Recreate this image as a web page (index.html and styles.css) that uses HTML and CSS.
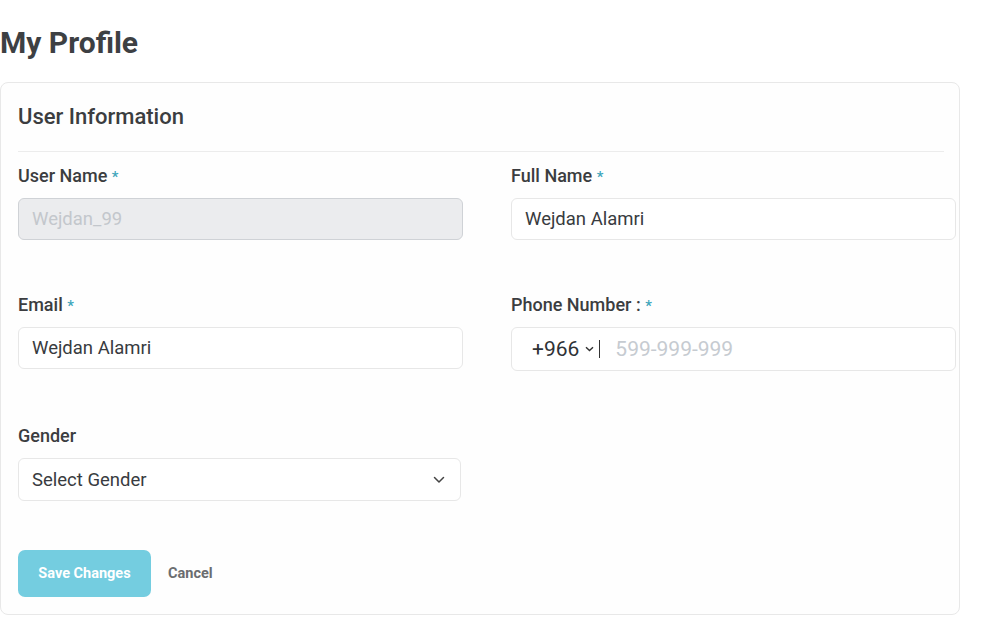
FILE: index.html
```html
<!DOCTYPE html>
<html lang="en">
<head>
<meta charset="utf-8">
<title>My Profile</title>
<link rel="stylesheet" href="styles.css">
</head>
<body>
<h1 class="page-title">My Profile</h1>
<section class="card">
  <h2 class="card-title">User Information</h2>
  <div class="divider"></div>
  <form class="form-grid">
    <div class="field">
      <label class="label">User Name <span class="req">*</span></label>
      <div class="input disabled">Wejdan_99</div>
    </div>
    <div class="field">
      <label class="label">Full Name <span class="req">*</span></label>
      <div class="input">Wejdan Alamri</div>
    </div>
    <div class="field">
      <label class="label">Email <span class="req">*</span></label>
      <div class="input">Wejdan Alamri</div>
    </div>
    <div class="field">
      <label class="label">Phone Number : <span class="req">*</span></label>
      <div class="input phone">
        <span class="code">+966</span>
        <svg class="code-caret" width="9" height="6" viewBox="0 0 9 6"><path d="M1 1.2 L4.5 4.6 L8 1.2" fill="none" stroke="#333" stroke-width="1.4"/></svg>
        <span class="sep"></span>
        <span class="placeholder">599-999-999</span>
      </div>
    </div>
    <div class="field">
      <label class="label">Gender</label>
      <div class="input select">
        <span>Select Gender</span>
        <svg class="caret" width="12" height="8" viewBox="0 0 12 8"><path d="M1.5 1.5 L6 6 L10.5 1.5" fill="none" stroke="#444" stroke-width="1.5" stroke-linecap="round" stroke-linejoin="round"/></svg>
      </div>
    </div>
  </form>
  <div class="actions">
    <button class="btn-primary" type="button">Save Changes</button>
    <button class="btn-link" type="button">Cancel</button>
  </div>
</section>
</body>
</html>
```
FILE: styles.css
```css
* { box-sizing: border-box; }
body {
  margin: 0;
  font-family: Roboto, "Liberation Sans", sans-serif;
  color: #3b3d40;
  background: #ffffff;
}
.page-title {
  margin: 26px 0 0 0;
  font-size: 30px;
  line-height: 34px;
  font-weight: 700;
  color: #3d4043;
}
.card {
  margin-top: 22px;
  width: 960px;
  border: 1px solid #e8e8e8;
  border-radius: 8px;
  background: #fefefe;
  padding: 20px 15px 17px 17px;
}
.card-title {
  margin: 0;
  font-size: 22px;
  line-height: 28px;
  font-weight: 500;
  color: #3b3d40;
}
.divider {
  margin-top: 20px;
  height: 1px;
  background: #ececec;
}
.form-grid {
  margin-top: 12px;
  display: grid;
  grid-template-columns: 445px 445px;
  column-gap: 48px;
  row-gap: 53px;
  align-items: start;
}
.field { display: flex; flex-direction: column; }
.label {
  font-size: 18px;
  line-height: 24px;
  font-weight: 500;
  color: #3b3d40;
  margin-bottom: 10px;
}
.req { color: #3ea6bb; font-size: 15px; line-height: 0; }
.input {
  height: 42px;
  border: 1px solid #e7e7e7;
  border-radius: 6px;
  background: #ffffff;
  padding: 0 13px;
  display: flex;
  align-items: center;
  font-size: 18.5px;
  color: #383b40;
}
.input.disabled {
  background: #ebecee;
  border-color: #cfd2d6;
  color: #c3c7cc;
}
.input.phone {
  height: 44px;
  padding-left: 20px;
  font-size: 21px;
}
.code { color: #2f3236; }
.code-caret { margin-left: 6px; }
.sep {
  width: 1px;
  height: 18px;
  background: #333;
  margin-left: 5px;
  margin-right: 15px;
}
.placeholder { color: #c6cbd1; }
.input.select {
  width: 443px;
  height: 43px;
  justify-content: space-between;
  padding-right: 15px;
}
.caret { display: block; }
.actions {
  margin-top: 49px;
  display: flex;
  align-items: center;
  gap: 17px;
}
.btn-primary {
  width: 133px;
  height: 47px;
  border: 0;
  border-radius: 7px;
  background: #74cde0;
  color: #ffffff;
  font-family: inherit;
  font-size: 14.5px;
  font-weight: 700;
}
.btn-link {
  border: 0;
  background: none;
  padding: 0;
  font-family: inherit;
  font-size: 14.5px;
  font-weight: 700;
  color: #6b6d70;
}
```
